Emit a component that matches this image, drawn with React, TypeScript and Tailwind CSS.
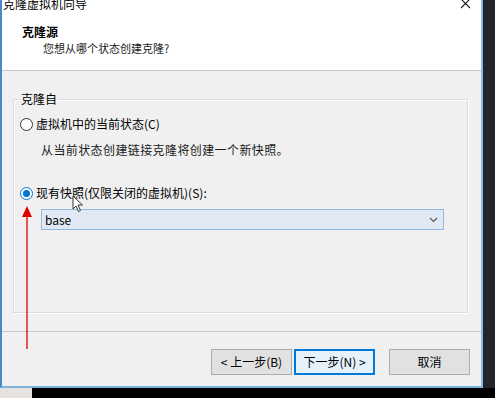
import React from 'react'

const font = { fontFamily: '"Noto Sans CJK SC", "Noto Sans", sans-serif' }

function Radio({ checked }: { checked?: boolean }) {
  return (
    <span
      className={
        checked
          ? 'flex h-[13px] w-[13px] shrink-0 items-center justify-center rounded-full border border-[#0078d7] bg-white'
          : 'flex h-[13px] w-[13px] shrink-0 items-center justify-center rounded-full border border-[#333333] bg-white'
      }
    >
      {checked && <span className="h-[7px] w-[7px] rounded-full bg-[#0078d7]" />}
    </span>
  )
}

function Button({ label, primary }: { label: string; primary?: boolean }) {
  return (
    <button
      className={
        primary
          ? 'flex h-[26px] w-[81px] items-center justify-center border border-[#0078d7] bg-[#e5f1fb] text-[12px] leading-[16px] text-black shadow-[inset_0_0_0_1px_#0078d7]'
          : 'flex h-[26px] w-[81px] items-center justify-center border border-[#adadad] bg-[#e1e1e1] text-[12px] leading-[16px] text-black'
      }
    >
      {label}
    </button>
  )
}

export default function App() {
  return (
    <div
      className="relative flex h-[398px] w-[495px] flex-col overflow-hidden bg-black text-[12px] leading-[16px] text-black"
      style={font}
    >
      <div className="flex h-[388px]">
        {/* dialog */}
        <div className="flex w-[483px] flex-col border-x-2 border-b-2 border-l-[#4a86c8] border-r-[#8fb8e0] border-b-[#7ab4dc] bg-[#f0f0f0]">
          {/* header */}
          <div className="flex h-[71px] shrink-0 flex-col border-b border-[#c8c8c8] bg-white">
            <div className="-mt-[4px] flex h-[16px] items-center pl-[1px] pr-[10px]">
              <span className="flex-1">克隆虚拟机向导</span>
              <svg width="11" height="11" viewBox="0 0 11 11" className="-mt-[1px]">
                <path d="M1 1 L10 10 M10 1 L1 10" stroke="#1a1a1a" strokeWidth="1.1" />
              </svg>
            </div>
            <div className="mt-[12px] pl-[20px] font-bold">克隆源</div>
            <div className="pl-[41px] text-[11px] text-[#1a1a1a]">您想从哪个状态创建克隆?</div>
          </div>

          {/* body */}
          <div className="flex h-[260px] shrink-0 flex-col pl-[11px] pt-[20px]">
            <fieldset className="h-[222px] w-[455px] border border-[#dcdcdc] shadow-[inset_1px_1px_0_#ffffff,1px_1px_0_#ffffff]">
              <legend className="ml-[6px] px-[1px] leading-[16px]">克隆自</legend>
              <div className="mt-[9px] flex items-center gap-[3px] pl-[6px]">
                <Radio />
                <span>虚拟机中的当前状态(C)</span>
              </div>
              <div className="mt-[10px] pl-[27px] tracking-[0.4px] text-[#1a1a1a]">从当前状态创建链接克隆将创建一个新快照。</div>
              <div className="mt-[27px] flex items-center gap-[3px] pl-[6px]">
                <Radio checked />
                <span>现有快照(仅限关闭的虚拟机)(S):</span>
              </div>
              <div className="ml-[27px] mt-[8px] flex h-[21px] w-[403px] items-center border border-[#8fb8e2] bg-[#e0e9f3] pl-[3px] pr-[5px]">
                <span className="flex-1">base</span>
                <svg width="9" height="6" viewBox="0 0 9 6">
                  <path d="M1 1 L4.5 4.5 L8 1" stroke="#555555" strokeWidth="1.1" fill="none" />
                </svg>
              </div>
            </fieldset>
          </div>

          {/* footer */}
          <div className="flex flex-1 justify-end border-t border-[#c9c9c9] pr-[11px] pt-[17px]">
            <div className="flex gap-[2px]">
              <Button label="< 上一步(B)" />
              <Button label="下一步(N) >" primary />
            </div>
            <div className="ml-[14px]">
              <Button label="取消" />
            </div>
          </div>
        </div>
        <div className="flex-1 bg-[#22262c]" />
      </div>
      <div className="flex flex-1">
        <div className="w-[32px] bg-[#e6e2de]" />
        <div className="flex-1 bg-black" />
      </div>

      {/* red annotation arrow */}
      <svg className="absolute left-[21px] top-[206px]" width="12" height="145" viewBox="0 0 12 145">
        <path d="M6 0 L11 11 L1 11 Z" fill="#e00000" />
        <path d="M6 10 L6 143" stroke="#e00000" strokeWidth="1.3" />
      </svg>

      {/* mouse cursor */}
      <svg className="absolute left-[72px] top-[195px]" width="12" height="18" viewBox="0 0 12 18">
        <path
          d="M1 1 L1 14 L4 11 L6.5 16.5 L8.5 15.5 L6 10 L10.5 10 Z"
          fill="#ffffff"
          stroke="#333333"
          strokeWidth="1"
          strokeLinejoin="round"
        />
      </svg>
    </div>
  )
}
